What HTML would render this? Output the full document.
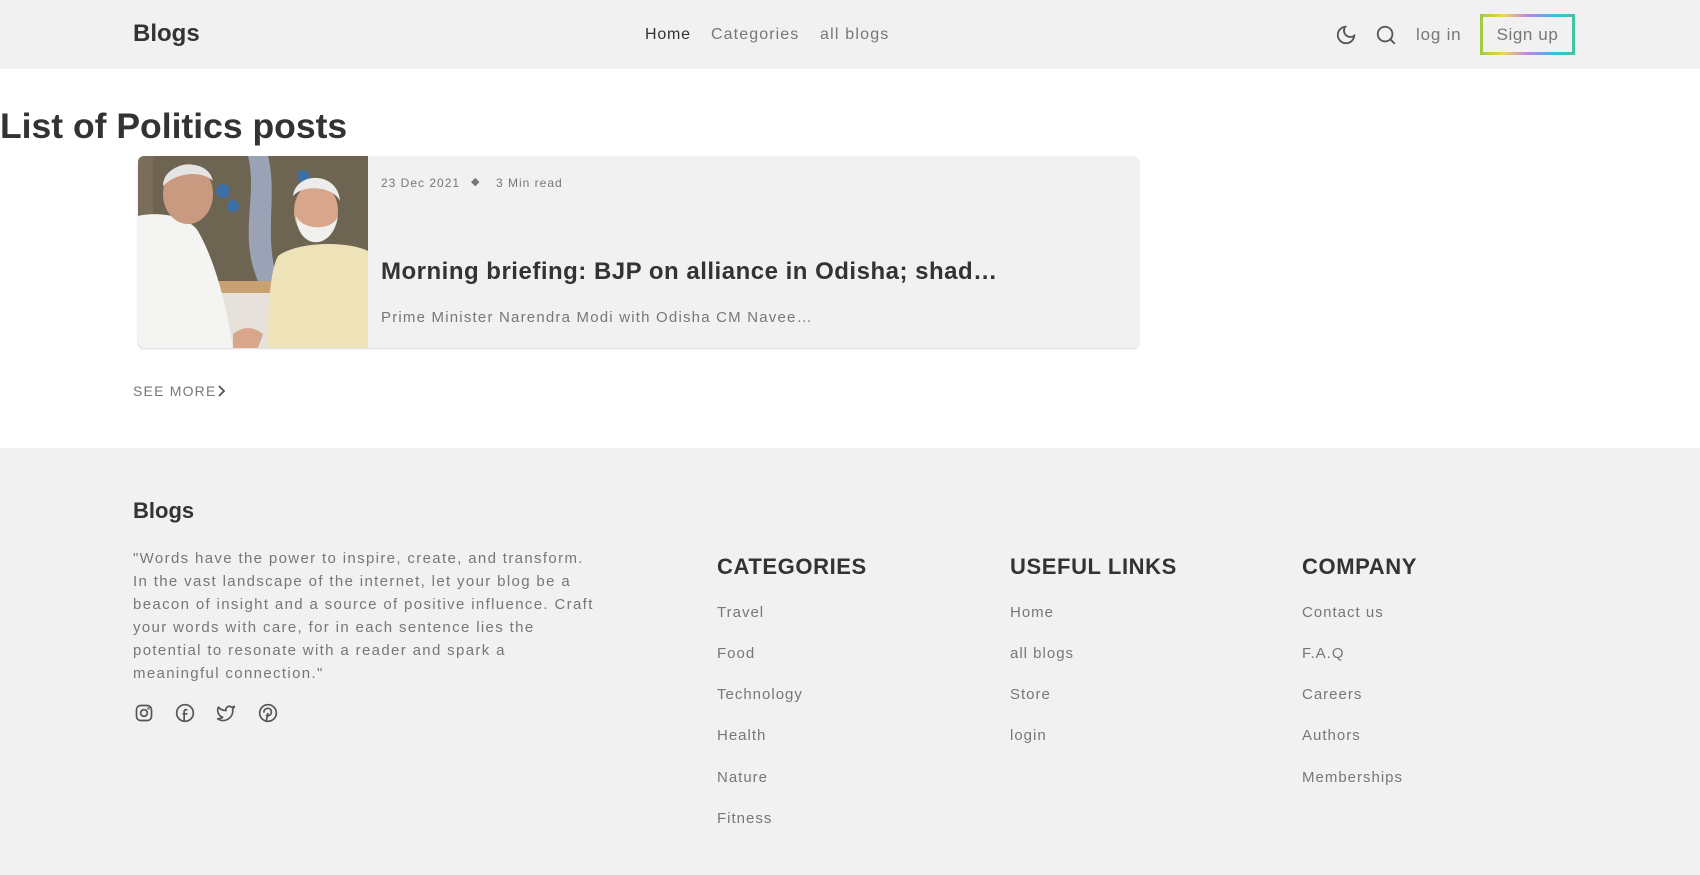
<!DOCTYPE html>
<html><head><meta charset="utf-8">
<style>
*{margin:0;padding:0;box-sizing:border-box}
body{width:1700px;height:875px;overflow:hidden;background:#fff;font-family:"Liberation Sans",sans-serif;color:#333;position:relative}
.abs{position:absolute;white-space:nowrap}
header{position:absolute;left:0;top:0;width:1700px;height:69px;background:#f1f1f1}
.nav{font-size:16px;color:#777;letter-spacing:.8px}
.gray{color:#777}
footer{position:absolute;left:0;top:448px;width:1700px;height:427px;background:#f1f1f1}
.fh{font-size:22px;font-weight:bold;letter-spacing:.6px;color:#333}
.fl{font-size:15px;color:#777;letter-spacing:1px}
</style></head><body>
<header>
<div class="abs" style="left:133px;top:20px;font-size:24px;font-weight:bold;color:#333">Blogs</div>
<div class="abs nav" style="left:645px;top:26px;color:#333">Home</div>
<div class="abs nav" style="left:711px;top:26px;letter-spacing:1.1px">Categories</div>
<div class="abs nav" style="left:820px;top:26px;letter-spacing:1.2px">all blogs</div>
<svg class="abs" style="left:1335px;top:24px" width="22" height="22" viewBox="0 0 24 24" fill="none" stroke="#555" stroke-width="2" stroke-linecap="round"><path d="M21 12.8A9 9 0 1 1 11.2 3a7 7 0 0 0 9.8 9.8z"/></svg>
<svg class="abs" style="left:1375px;top:24px" width="22" height="22" viewBox="0 0 24 24" fill="none" stroke="#555" stroke-width="2" stroke-linecap="round"><circle cx="11" cy="11" r="8"/><path d="M21 21l-4.3-4.3"/></svg>
<div class="abs nav" style="left:1416px;top:25px;font-size:17px">log in</div>
<div class="abs" style="left:1480px;top:14px;width:95px;height:41px;padding:3px;background:linear-gradient(90deg,#9ccc3c,#f2d64a 25%,#c580e8 50%,#3cb8f0 75%,#3cc8a0)"><div style="width:100%;height:100%;background:#f1f1f1;text-align:center;line-height:35px;font-size:17px;color:#777;letter-spacing:.6px">Sign up</div></div>
</header>

<div class="abs" style="left:0;top:106px;font-size:35.5px;font-weight:bold;color:#333">List of Politics posts</div>

<div class="abs" style="left:138px;top:156px;width:1001px;height:192px;background:#f1f1f1;border-radius:6px;overflow:hidden;box-shadow:0 1px 2px rgba(0,0,0,.15)">
<svg style="position:absolute;left:0;top:0" width="230" height="192" viewBox="0 0 230 192">
<rect width="230" height="192" fill="#7a6e5a"/>
<rect x="15" y="0" width="215" height="125" fill="#6d6552"/>
<path d="M110 0 C120 40 100 80 120 125 L140 125 C125 80 140 40 130 0Z" fill="#9aa3b5"/>
<circle cx="85" cy="35" r="7" fill="#3d6fa8"/><circle cx="95" cy="50" r="6" fill="#3d6fa8"/><circle cx="165" cy="20" r="6" fill="#3d6fa8"/><circle cx="180" cy="70" r="6" fill="#3d6fa8"/><circle cx="60" cy="20" r="5" fill="#3d6fa8"/>
<rect x="60" y="125" width="170" height="12" fill="#c9a070"/>
<rect x="60" y="137" width="170" height="55" fill="#e7e1db"/>
<path d="M0 60 C20 55 50 60 60 75 C80 110 90 160 95 192 L0 192Z" fill="#f4f4f2"/>
<ellipse cx="50" cy="38" rx="25" ry="30" fill="#c99a80"/>
<path d="M25 30 C25 5 70 0 75 25 C65 15 40 15 25 30Z" fill="#e4e4e4"/>
<path d="M140 100 C160 85 210 85 230 95 L230 192 L130 192 C130 150 132 115 140 100Z" fill="#eee2b8"/>
<ellipse cx="178" cy="55" rx="22" ry="28" fill="#d8a68a"/>
<path d="M158 60 C160 95 195 95 200 60 C195 75 165 75 158 60Z" fill="#f0f0ee"/>
<path d="M155 40 C158 15 200 15 202 45 C195 30 165 28 155 40Z" fill="#ececec"/>
<path d="M95 178 C105 170 115 170 125 178 L120 192 L95 192Z" fill="#d8a68a"/>
</svg>
<div class="abs gray" style="left:243px;top:20px;font-size:12px;letter-spacing:1px">23 Dec 2021</div>
<div class="abs gray" style="left:333px;top:19px;font-size:11px">◆</div>
<div class="abs gray" style="left:358px;top:20px;font-size:12px;letter-spacing:1px">3 Min read</div>
<div class="abs" style="left:243px;top:102px;font-size:24px;font-weight:bold;color:#333;letter-spacing:.5px">Morning briefing: BJP on alliance in Odisha; shad…</div>
<div class="abs gray" style="left:243px;top:153px;font-size:15px;letter-spacing:1.2px">Prime Minister Narendra Modi with Odisha CM Navee…</div>
</div>

<div class="abs gray" style="left:133px;top:383px;font-size:14px;letter-spacing:1.2px">SEE MORE</div>
<svg class="abs" style="left:215px;top:384px" width="12" height="14" viewBox="0 0 12 14" fill="none" stroke="#555" stroke-width="1.8"><path d="M4 2l5 5-5 5"/></svg>

<footer>
<div class="abs" style="left:133px;top:50px;font-size:22px;font-weight:bold;color:#333">Blogs</div>
<div class="abs fl" style="left:133px;top:99px;line-height:23px;white-space:nowrap;font-size:15px;letter-spacing:1.35px">"Words have the power to inspire, create, and transform.<br>In the vast landscape of the internet, let your blog be a<br>beacon of insight and a source of positive influence. Craft<br>your words with care, for in each sentence lies the<br>potential to resonate with a reader and spark a<br>meaningful connection."</div>
<svg class="abs" style="left:134px;top:255px" width="20" height="20" viewBox="0 0 24 24" fill="none" stroke="#555" stroke-width="2"><rect x="3" y="3" width="18" height="18" rx="5"/><circle cx="12" cy="12" r="4"/><circle cx="17.5" cy="6.5" r=".5"/></svg>
<svg class="abs" style="left:175px;top:255px" width="20" height="20" viewBox="0 0 24 24" fill="none" stroke="#555" stroke-width="2"><circle cx="12" cy="12" r="10"/><path d="M15 8h-2a2 2 0 0 0-2 2v12M9 13h6"/></svg>
<svg class="abs" style="left:216px;top:255px" width="20" height="20" viewBox="0 0 24 24" fill="none" stroke="#555" stroke-width="2" stroke-linejoin="round"><path d="M22 4s-.7 2.1-2 3.4c1.6 10-9.4 17.3-18 11.6 2.2.1 4.4-.6 6-2C3 15.5.5 9.6 3 5c2.2 2.6 5.6 4.1 9 4-.9-4.2 4-6.6 7-3.8 1.1 0 3-1.2 3-1.2z"/></svg>
<svg class="abs" style="left:258px;top:255px" width="20" height="20" viewBox="0 0 24 24" fill="none" stroke="#555" stroke-width="2"><circle cx="12" cy="12" r="10"/><path d="M10 21l2-9M9.5 14.5c1.5 1.5 6 1 6.5-3 .5-3.5-2-5.5-5-5s-4.5 3-3.5 5"/></svg>

<div class="abs fh" style="left:717px;top:106px">CATEGORIES</div>
<div class="abs fl" style="left:717px;top:156px">Travel</div>
<div class="abs fl" style="left:717px;top:197px">Food</div>
<div class="abs fl" style="left:717px;top:238px">Technology</div>
<div class="abs fl" style="left:717px;top:279px">Health</div>
<div class="abs fl" style="left:717px;top:321px">Nature</div>
<div class="abs fl" style="left:717px;top:362px">Fitness</div>

<div class="abs fh" style="left:1010px;top:106px">USEFUL LINKS</div>
<div class="abs fl" style="left:1010px;top:156px">Home</div>
<div class="abs fl" style="left:1010px;top:197px">all blogs</div>
<div class="abs fl" style="left:1010px;top:238px">Store</div>
<div class="abs fl" style="left:1010px;top:279px">login</div>

<div class="abs fh" style="left:1302px;top:106px">COMPANY</div>
<div class="abs fl" style="left:1302px;top:156px">Contact us</div>
<div class="abs fl" style="left:1302px;top:197px">F.A.Q</div>
<div class="abs fl" style="left:1302px;top:238px">Careers</div>
<div class="abs fl" style="left:1302px;top:279px">Authors</div>
<div class="abs fl" style="left:1302px;top:321px">Memberships</div>
</footer>
</body></html>
